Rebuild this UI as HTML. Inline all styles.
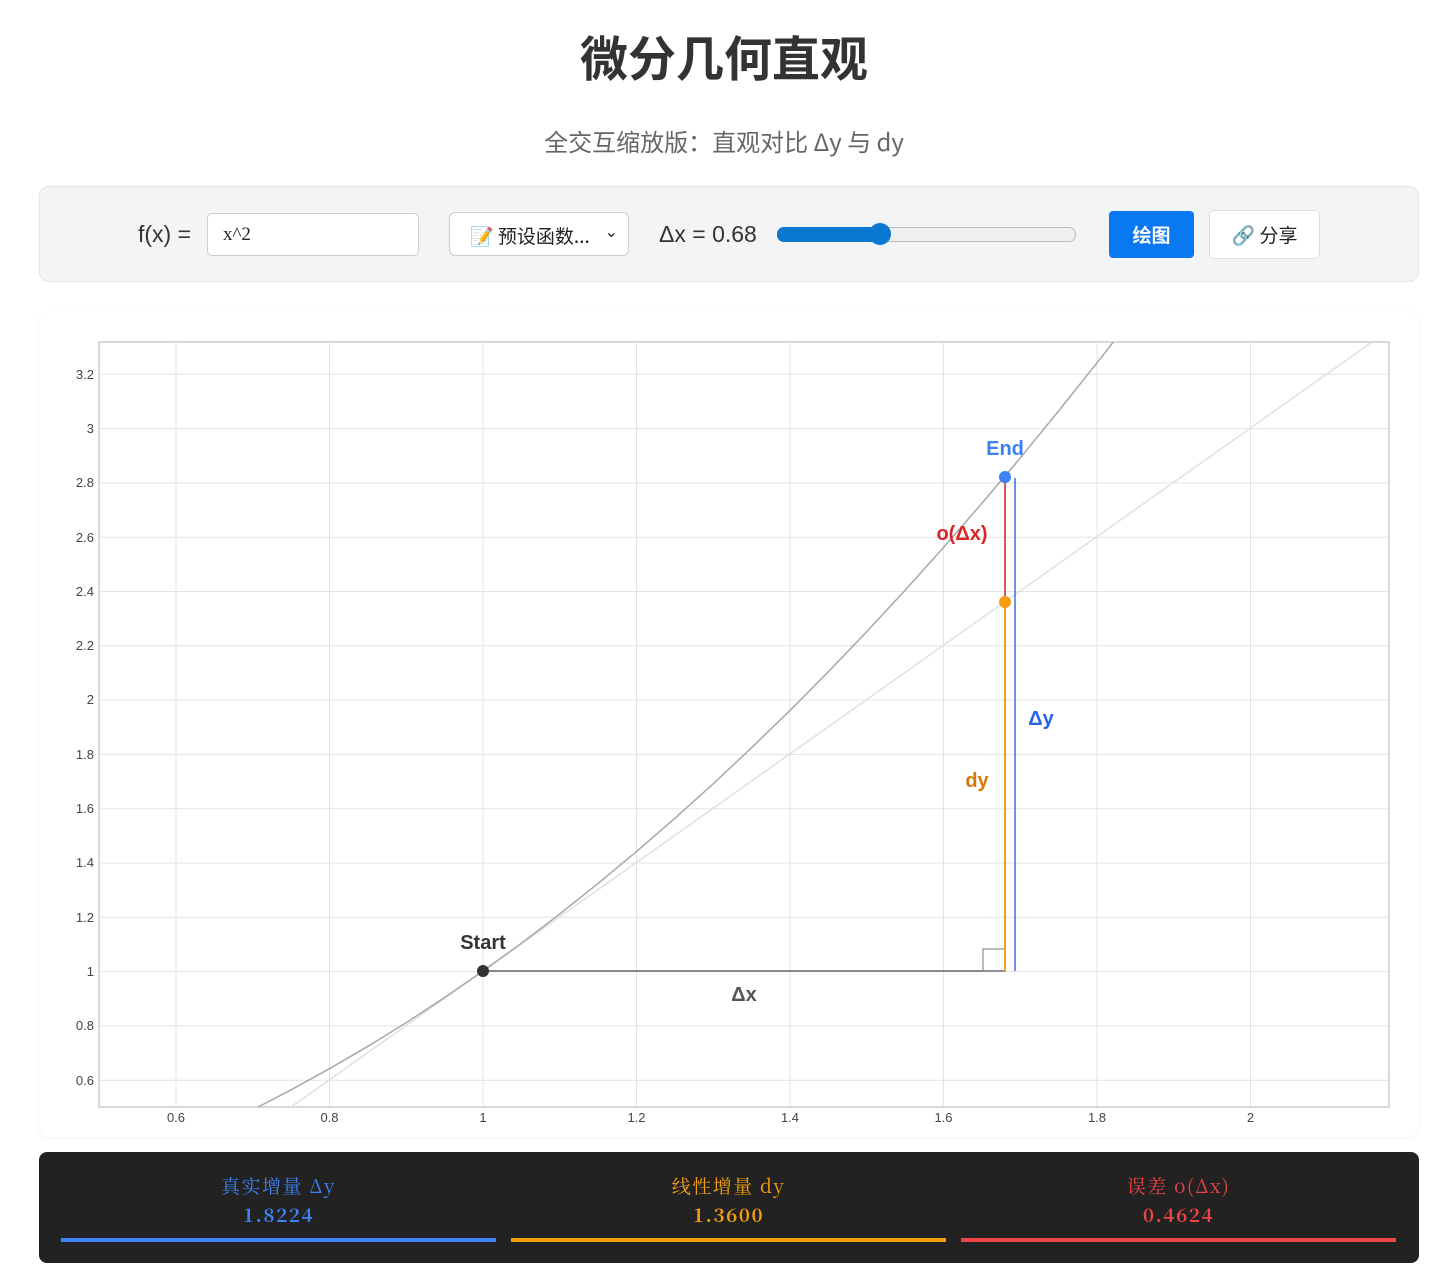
<!DOCTYPE html>
<html><head><meta charset="utf-8"><style>
body{margin:0;background:#fff;font-family:"Liberation Sans","Noto Sans CJK SC",sans-serif;width:1448px;height:1284px;position:relative;overflow:hidden}
.a{position:absolute}
h1{position:absolute;left:0;width:1448px;top:20px;margin:0;text-align:center;font-size:48px;font-weight:700;color:#333;font-family:"Noto Sans CJK SC",sans-serif}
.sub{top:123px;left:0;width:1448px;text-align:center;font-size:24px;color:#666;font-family:"Noto Sans CJK SC",sans-serif}
.ctrl{left:39px;top:186px;width:1378px;height:94px;background:#f3f4f6;border:1px solid #e2e4e8;border-radius:10px}
.box{background:#fff;border:1px solid #ccc;border-radius:5px}
.card{left:39px;top:312px;width:1380px;height:825px;background:#fff;border-radius:10px;box-shadow:0 1px 4px rgba(0,0,0,.06)}
.bar{left:39px;top:1152px;width:1380px;height:111px;background:#222;border-radius:8px}
.col{top:0;width:435px;text-align:center;font-family:"Noto Serif CJK SC",serif;font-size:19px;letter-spacing:1.5px}
.col .l{margin-top:20px;height:28px}
.col .v{font-weight:700;margin-top:1px}
.col .u{position:absolute;left:0;right:0;top:86px;height:4px}
</style></head><body>
<h1>微分几何直观</h1>
<div class="a sub">全交互缩放版：直观对比 Δy 与 dy</div>
<div class="a ctrl"></div>
<div class="a" style="left:138px;top:221px;font-size:23px;color:#333">f(x) =</div>
<div class="a box" style="left:207px;top:213px;width:210px;height:41px"><span style="position:absolute;left:15px;top:10px;font-family:'Liberation Serif',serif;font-size:19px;color:#222">x^2</span></div>
<div class="a box" style="left:449px;top:212px;width:178px;height:42px;border-radius:6px"><span style="position:absolute;left:20px;top:9px;font-size:19px;color:#222;font-family:'Noto Sans CJK SC',sans-serif">📝 预设函数...</span><span style="position:absolute;right:10px;top:9px;font-size:16px;color:#222">⌄</span></div>
<div class="a" style="left:659px;top:221px;font-size:23px;color:#333">Δx = 0.68</div>
<div class="a" style="left:777px;top:227px;width:297px;height:13px;background:#efefef;border:1px solid #bbb;border-radius:7px"></div>
<div class="a" style="left:777px;top:227px;width:103px;height:15px;background:#0a78d1;border-radius:7px"></div>
<div class="a" style="left:869px;top:223px;width:22px;height:22px;background:#0a78d1;border-radius:50%"></div>
<div class="a" style="left:1109px;top:211px;width:85px;height:47px;background:#0a78f0;border-radius:4px;color:#fff;font-weight:700;font-size:19px;text-align:center;line-height:47px;font-family:'Noto Sans CJK SC',sans-serif">绘图</div>
<div class="a box" style="left:1209px;top:210px;width:109px;height:47px;border-color:#ddd;font-size:19px;text-align:center;line-height:47px;color:#222;font-family:'Noto Sans CJK SC',sans-serif">🔗 分享</div>
<div class="a card"></div>
<svg class="a" style="left:0;top:0" width="1448" height="1284">
<g stroke="#e3e3e3" stroke-width="1">
<path d="M176 342V1107M329.5 342V1107M483 342V1107M636.5 342V1107M790 342V1107M943.5 342V1107M1097 342V1107M1250.5 342V1107"/>
<path d="M99 374.3H1389M99 428.6H1389M99 482.9H1389M99 537.2H1389M99 591.5H1389M99 645.8H1389M99 700.1H1389M99 754.4H1389M99 808.7H1389M99 863H1389M99 917.3H1389M99 971.6H1389M99 1025.9H1389M99 1080.2H1389"/>
</g>
<rect x="99" y="342" width="1290" height="765" fill="none" stroke="#ccc" stroke-width="1.5"/>
<g font-family="Liberation Sans,sans-serif" font-size="13" fill="#444" text-anchor="end">
<text x="94" y="379">3.2</text><text x="94" y="433">3</text><text x="94" y="487">2.8</text><text x="94" y="542">2.6</text><text x="94" y="596">2.4</text><text x="94" y="650">2.2</text><text x="94" y="704">2</text><text x="94" y="759">1.8</text><text x="94" y="813">1.6</text><text x="94" y="867">1.4</text><text x="94" y="922">1.2</text><text x="94" y="976">1</text><text x="94" y="1030">0.8</text><text x="94" y="1085">0.6</text>
</g>
<g font-family="Liberation Sans,sans-serif" font-size="13" fill="#444" text-anchor="middle">
<text x="176" y="1122">0.6</text><text x="329.5" y="1122">0.8</text><text x="483" y="1122">1</text><text x="636.5" y="1122">1.2</text><text x="790" y="1122">1.4</text><text x="943.5" y="1122">1.6</text><text x="1097" y="1122">1.8</text><text x="1250.5" y="1122">2</text>
</g>
<line x1="291" y1="1107" x2="1372" y2="342" stroke="#e0e0e0" stroke-width="1.5"/>
<polyline fill="none" stroke="#a8a8a8" stroke-width="1.5" points="258.2,1107 291.1,1089.8 329.5,1068.7 367.9,1046.3 406.3,1022.6 444.6,997.5 483,971 521.4,943.2 559.8,914 598.1,883.4 636.5,851.5 674.9,818.3 713.3,783.7 751.6,747.7 790,710.4 828.4,671.7 866.8,631.6 905.1,590.2 943.5,547.5 981.9,503.3 1020.3,457.9 1058.6,411 1097,362.8 1113.3,342"/>
<line x1="483" y1="971" x2="1005" y2="971" stroke="#666" stroke-width="1.5"/>
<rect x="983" y="949" width="22" height="22" fill="none" stroke="#777" stroke-width="1"/>
<line x1="1015" y1="478" x2="1015" y2="971" stroke="#3b6fe0" stroke-width="1.5"/>
<line x1="1005" y1="477" x2="1005" y2="602" stroke="#e05555" stroke-width="2"/>
<line x1="1005" y1="602" x2="1005" y2="971" stroke="#f0a020" stroke-width="2"/>
<circle cx="483" cy="971" r="6" fill="#333"/>
<circle cx="1005" cy="477" r="6" fill="#3b82f6"/>
<circle cx="1005" cy="602" r="6" fill="#f59e0b"/>
<g font-family="Liberation Sans,sans-serif" font-weight="700" font-size="20">
<text x="483" y="949" text-anchor="middle" fill="#333">Start</text>
<text x="1005" y="455" text-anchor="middle" fill="#3b82f6">End</text>
<text x="962" y="540" text-anchor="middle" fill="#dc2626">o(Δx)</text>
<text x="1041" y="725" text-anchor="middle" fill="#2563eb">Δy</text>
<text x="977" y="787" text-anchor="middle" fill="#d97706">dy</text>
<text x="744" y="1001" text-anchor="middle" fill="#555">Δx</text>
</g>
</svg>
<div class="a bar">
<div class="a col" style="left:22px;color:#3b82f6"><div class="l">真实增量 Δy</div><div class="v">1.8224</div><div class="u" style="background:#3b82f6"></div></div>
<div class="a col" style="left:472px;color:#f59e0b"><div class="l">线性增量 dy</div><div class="v">1.3600</div><div class="u" style="background:#f59e0b"></div></div>
<div class="a col" style="left:922px;color:#ef4444"><div class="l">误差 o(Δx)</div><div class="v">0.4624</div><div class="u" style="background:#ef4444"></div></div>
</div>
</body></html>
